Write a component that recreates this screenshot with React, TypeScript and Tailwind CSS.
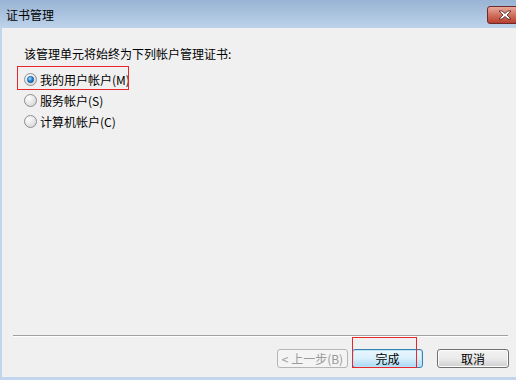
import type { ReactNode } from 'react';

const font = { fontFamily: '"SimSun", "Noto Sans CJK SC", "Liberation Sans", sans-serif' };

function Radio({ checked }: { checked?: boolean }) {
  return (
    <svg width="13" height="13" viewBox="0 0 13 13" className="shrink-0">
      <defs>
        <radialGradient id="rbg" cx="0.35" cy="0.3" r="0.8">
          <stop offset="0" stopColor="#ffffff" />
          <stop offset="1" stopColor="#d4d4d4" />
        </radialGradient>
        <radialGradient id="rdot" cx="0.4" cy="0.35" r="0.7">
          <stop offset="0" stopColor="#a6e0ff" />
          <stop offset="0.5" stopColor="#2c8ee0" />
          <stop offset="1" stopColor="#0f4f94" />
        </radialGradient>
      </defs>
      <circle cx="6.5" cy="6.5" r="6" fill="url(#rbg)" stroke="#8f8f8f" strokeWidth="1" />
      {checked && <circle cx="6.5" cy="6.5" r="3.2" fill="url(#rdot)" stroke="#1b5a96" strokeWidth="0.6" />}
    </svg>
  );
}

function RadioRow({ checked, children, focused }: { checked?: boolean; children: ReactNode; focused?: boolean }) {
  return (
    <div className="relative flex items-center h-[21px] gap-[3px]">
      <Radio checked={checked} />
      <span className="text-[12px] leading-[14px] text-black">{children}</span>
      {focused && (
        <div className="absolute left-[-7px] top-[-3px] w-[112px] h-[24px] border border-[#e8262b]" />
      )}
    </div>
  );
}

function Button({ children, variant }: { children: ReactNode; variant?: 'default' | 'disabled' | 'primary' }) {
  const base = 'h-[19px] flex items-center justify-center rounded-[3px] border text-[12px] leading-[14px]';
  if (variant === 'disabled')
    return (
      <div className={`${base} w-[71px] border-[#b5b5b5] bg-[#f4f4f4] text-[#9a9a9a]`}>{children}</div>
    );
  if (variant === 'primary')
    return (
      <div className={`${base} w-[71px] border-[#3c7fb1] bg-gradient-to-b from-[#eaf6fd] via-[#d9f0fc] to-[#a7d9f5] text-black shadow-[inset_0_0_0_1px_#b8e6fb]`}>
        {children}
      </div>
    );
  return (
    <div className={`${base} w-[72px] border-[#707070] bg-gradient-to-b from-[#f2f2f2] via-[#ebebeb] to-[#cfcfcf] text-black shadow-[inset_0_0_0_1px_#fcfcfc]`}>
      {children}
    </div>
  );
}

export default function App() {
  return (
    <div className="w-[516px] h-[380px] flex flex-col bg-[#c1d6ec] overflow-hidden" style={font}>
      {/* title bar */}
      <div className="h-[28px] shrink-0 flex items-start bg-gradient-to-b from-[#98b3d4] to-[#bed3ea]">
        <span className="ml-[6px] mt-[8px] text-[12px] leading-[14px] text-black">证书管理</span>
        <div className="ml-auto mt-[6px] -mr-[15px] w-[44px] h-[18px] rounded-[3px] border border-[#6d2a2a] bg-gradient-to-b from-[#e9a99c] via-[#d0705e] to-[#b83d2d] flex items-center pl-[10px]">
          <svg width="14" height="10" viewBox="0 0 14 10">
            <path
              d="M1 1 L4 1 L7 3.5 L10 1 L13 1 L9 5 L13 9 L10 9 L7 6.5 L4 9 L1 9 L5 5 Z"
              fill="#ffffff"
              stroke="#4a2020"
              strokeWidth="0.8"
              strokeLinejoin="round"
            />
          </svg>
        </div>
      </div>

      {/* body */}
      <div className="flex-1 ml-[2px] mb-[3px] bg-[#f0f0f0] flex flex-col">
        <div className="pl-[22px] pt-[19px]">
          <div className="text-[12px] leading-[14px] text-black">该管理单元将始终为下列帐户管理证书:</div>
          <div className="mt-[8px] flex flex-col">
            <RadioRow checked focused>我的用户帐户(M)</RadioRow>
            <RadioRow>服务帐户(S)</RadioRow>
            <RadioRow>计算机帐户(C)</RadioRow>
          </div>
        </div>

        <div className="mt-auto">
          <div className="ml-[11px] mr-[8px] h-[2px] border-t border-[#a0a0a0] border-b border-b-white" />
          <div className="mt-[12px] mb-[9px] mr-[7px] flex justify-end items-center">
            <Button variant="disabled">&lt; 上一步(B)</Button>
            <div className="relative ml-[4px]">
              <Button variant="primary">完成</Button>
              <div className="absolute left-0 top-[-12px] w-[65px] h-[31px] border border-[#e8262b]" />
            </div>
            <div className="ml-[14px]">
              <Button>取消</Button>
            </div>
          </div>
        </div>
      </div>
    </div>
  );
}
